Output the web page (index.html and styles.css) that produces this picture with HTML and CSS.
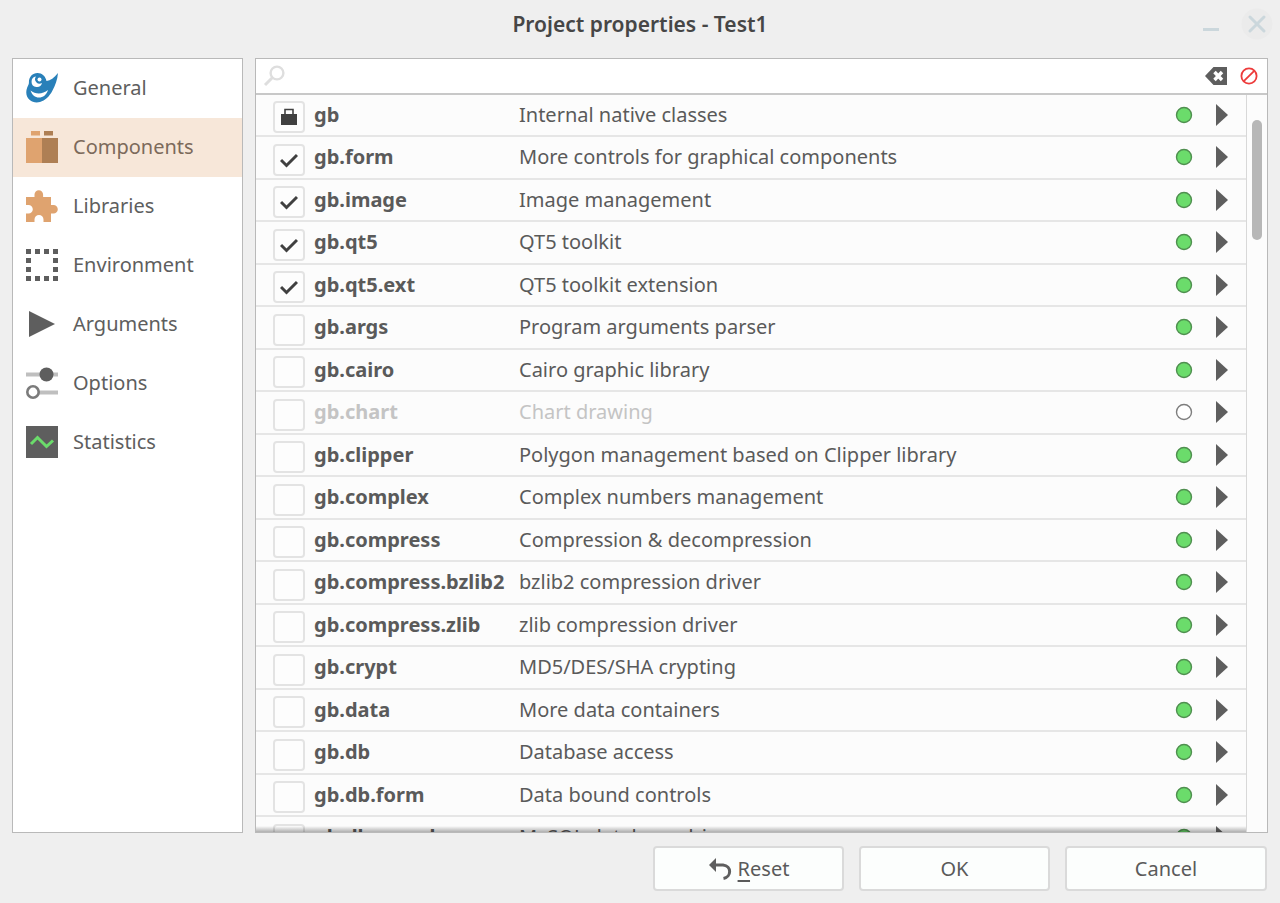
FILE: index.html
```html
<!DOCTYPE html>
<html lang="en">

<head>
    <meta charset="utf-8">
    <title>Project properties - Test1</title>
    <link rel="stylesheet" href="styles.css">
</head>

<body>
    <header class="titlebar">
        <h1>Project properties - Test1</h1>
        <div class="window-buttons">
            <button type="button" aria-label="Minimize">
                <svg width="32" height="32" viewBox="0 0 32 32"><path d="M8 21.5h16" stroke="#cbd7dc" stroke-width="3"/></svg>
            </button>
            <button type="button" aria-label="Close">
                <svg width="32" height="32" viewBox="0 0 32 32"><circle cx="16" cy="16" r="15.5" fill="#ebebeb"/><path d="M9 9l14 14M23 9L9 23" stroke="#cbd7dc" stroke-width="3" stroke-linecap="round"/></svg>
            </button>
        </div>
    </header>

    <main class="content">
        <nav class="sidebar">
            <a href="#general">
                <svg width="32" height="32" viewBox="0 0 32 32">
                    <path fill="#2980b9" d="M32 1C28 6 24.500 8.500 20.500 9C19.500 4 16 1 11.500 1C6.500 1 2.800 5 2.900 10.500C3 12.500 2 13.500 1.200 15.500C-.6 20 .2 25 3.500 27.800C6.500 30.500 10.500 31 14 30C19 28.500 23.500 24.500 26.500 18.500C29 13.500 31.500 8 32 1z"/>
                    <path fill="#fff" d="M4.500 18.500C9.500 22.500 16.500 22.500 22 18C20.500 23 17 25.500 13 25.500C9 25.500 6 23 4.500 18.500z"/>
                    <path fill="#fff" d="M10 4.500a5.300 5.300 0 1 0 6 6.500a4.500 4.500 0 0 1-6-6.500z"/>
                    <circle cx="13.500" cy="7.500" r="2" fill="#fff"/>
                </svg>
                <span>General</span>
            </a>
            <a href="#components" class="selected">
                <svg width="32" height="32" viewBox="0 0 32 32">
                    <path fill="#dfa36f" d="M5 0h9v4.500H5zM0 7h16v25H0z"/>
                    <path fill="#ae7f54" d="M18 0h9v4.500h-9zM16 7h16v25H16z"/>
                </svg>
                <span>Components</span>
            </a>
            <a href="#libraries">
                <svg width="32" height="32" viewBox="0 0 32 32">
                    <path fill="#dfa36f" d="M0 7h8.500V4.500a4.300 4.300 0 0 1 8.600 0V7H25v8h2.500a4.300 4.300 0 0 1 0 8.600H25V32h-7.500v-2.500a4.500 4.500 0 0 0-9 0V32H0v-8.400h2.500a4.300 4.300 0 0 0 0-8.600H0z"/>
                </svg>
                <span>Libraries</span>
            </a>
            <a href="#environment">
                <svg width="32" height="32" viewBox="0 0 32 32">
                    <path fill="none" stroke="#5e5e5e" stroke-width="5" stroke-dasharray="5 4" d="M0 2.500h32M0 29.500h32"/>
                    <path fill="none" stroke="#5e5e5e" stroke-width="5" stroke-dasharray="5 4" d="M2.500 9v14M29.500 9v14"/>
                </svg>
                <span>Environment</span>
            </a>
            <a href="#arguments">
                <svg width="32" height="32" viewBox="0 0 32 32"><path fill="#5e5e5e" d="M3 3l26 13L3 29z"/></svg>
                <span>Arguments</span>
            </a>
            <a href="#options">
                <svg width="32" height="32" viewBox="0 0 32 32">
                    <path stroke="#bfbfbf" stroke-width="4" d="M0 7.500h32M12 25.500h20"/>
                    <circle cx="20.500" cy="7.500" r="7" fill="#5e5e5e"/>
                    <circle cx="7" cy="25" r="5.700" fill="#fff" stroke="#7b7b7b" stroke-width="2.600"/>
                </svg>
                <span>Options</span>
            </a>
            <a href="#statistics">
                <svg width="32" height="32" viewBox="0 0 32 32">
                    <path fill="#5e5e5e" d="M0 0h32v32H0z"/>
                    <path fill="none" stroke="#6bdc6b" stroke-width="3" d="M5 18l6.500-6.500L20.500 20.500l6.500-6"/>
                </svg>
                <span>Statistics</span>
            </a>
        </nav>

        <section class="components">
            <div class="search">
                <label for="search-field">
                    <svg width="22" height="22" viewBox="0 0 22 22"><circle cx="14" cy="8" r="6.400" fill="none" stroke="#dedede" stroke-width="2.400"/><path d="M9.500 12.500L2 20" stroke="#dedede" stroke-width="3"/></svg>
                </label>
                <input type="text" id="search-field" aria-label="Search components">
                <button type="button" aria-label="Clear">
                    <svg width="24" height="20" viewBox="0 0 24 20"><path fill="#5e5e5e" d="M1 10L9.500 1H23v18H9.500z"/><path d="M10.500 6l7.500 8M18 6l-7.500 8" stroke="#fff" stroke-width="3.400"/></svg>
                </button>
                <button type="button" aria-label="Uncheck all">
                    <svg width="18" height="18" viewBox="0 0 18 18"><circle cx="9" cy="9" r="7.600" fill="none" stroke="#ed3b3b" stroke-width="1.800"/><path d="M3.800 14.200L14.200 3.800" stroke="#ed3b3b" stroke-width="1.800"/></svg>
                </button>
            </div>
            <div class="list">
                <div class="rows">
                    <table>
                        <tbody id="component-rows"></tbody>
                    </table>
                </div>
                <div class="scrollbar">
                    <div class="thumb"></div>
                </div>
            </div>
        </section>
    </main>

    <footer class="buttons">
        <button type="button">
            <svg width="24" height="24" viewBox="0 0 24 24"><path fill="#5e5e5e" d="M1 8l7-7v14z"/><path fill="none" stroke="#5e5e5e" stroke-width="3" d="M6 8h9c9 1 8.500 12 .5 13.500"/></svg>
            <span><u>R</u>eset</span>
        </button>
        <button type="button">OK</button>
        <button type="button" class="cancel">Cancel</button>
    </footer>

    <script>
        const components = [
            { name: "gb", text: "Internal native classes", state: "locked" },
            { name: "gb.form", text: "More controls for graphical components", state: "checked" },
            { name: "gb.image", text: "Image management", state: "checked" },
            { name: "gb.qt5", text: "QT5 toolkit", state: "checked" },
            { name: "gb.qt5.ext", text: "QT5 toolkit extension", state: "checked" },
            { name: "gb.args", text: "Program arguments parser" },
            { name: "gb.cairo", text: "Cairo graphic library" },
            { name: "gb.chart", text: "Chart drawing", state: "missing" },
            { name: "gb.clipper", text: "Polygon management based on Clipper library" },
            { name: "gb.complex", text: "Complex numbers management" },
            { name: "gb.compress", text: "Compression & decompression" },
            { name: "gb.compress.bzlib2", text: "bzlib2 compression driver" },
            { name: "gb.compress.zlib", text: "zlib compression driver" },
            { name: "gb.crypt", text: "MD5/DES/SHA crypting" },
            { name: "gb.data", text: "More data containers" },
            { name: "gb.db", text: "Database access" },
            { name: "gb.db.form", text: "Data bound controls" },
            { name: "gb.db.mysql", text: "MySQL database driver" }
        ];

        const marks = {
            locked: '<svg width="18" height="18" viewBox="0 0 18 18"><path fill="#404040" d="M1 6h16v11H1z"/><path fill="none" stroke="#404040" stroke-width="1.600" d="M5 7V1.500h8V7"/></svg>',
            checked: '<svg width="18" height="18" viewBox="0 0 18 18"><path fill="none" stroke="#404040" stroke-width="3" d="M1 9l5.500 5.500L17 4"/></svg>'
        };

        function createRows() {
            let body = document.getElementById("component-rows");
            components.forEach(item => {
                let row = document.createElement("tr");
                let state = item.state || "";
                let on = state === "locked" || state === "checked";
                if (state === "missing") {
                    row.classList.add("missing");
                }
                row.innerHTML = `
                    <td class="check">
                        <span class="box">
                            <input type="checkbox" id="${item.name}" ${on ? "checked" : ""} ${state === "locked" || state === "missing" ? "disabled" : ""}>
                            ${marks[state] || ""}
                        </span>
                    </td>
                    <td class="name"><label for="${item.name}"></label></td>
                    <td class="text"></td>
                    <td class="status"><svg width="18" height="18" viewBox="0 0 18 18"><circle cx="9" cy="9" r="7.500"/></svg></td>
                    <td class="more"><button type="button" aria-label="Details of ${item.name}"><svg width="12" height="22" viewBox="0 0 12 22"><path fill="#5e5e5e" d="M0 0l12 11L0 22z"/></svg></button></td>`;
                row.querySelector("label").textContent = item.name;
                row.querySelector(".text").textContent = item.text;
                body.append(row);
            });
        }

        createRows();
    </script>
</body>

</html>
```
FILE: styles.css
```css
* {
    margin: 0;
    padding: 0;
    box-sizing: border-box;
}

body {
    height: 100vh;
    display: flex;
    flex-direction: column;
    padding: 0 12px 12px;
    background-color: #efefef;
    color: #5a5a5a;
    font: 20px "Noto Sans", sans-serif;
    overflow: hidden;
}

button {
    display: block;
    font: inherit;
    color: inherit;
    border: none;
    background: none;
}

svg {
    display: block;
    flex: none;
}

.titlebar {
    flex: none;
    height: 58px;
    padding-bottom: 11px;
    display: grid;
    grid-template-columns: 1fr auto 1fr;
    align-items: center;
}

.titlebar h1 {
    grid-column: 2;
    font: 600 21px "Noto Sans", sans-serif;
    color: #464646;
}

.window-buttons {
    display: flex;
    justify-content: flex-end;
    gap: 14px;
    margin-right: -5px;
}

.content {
    flex: 1;
    min-height: 0;
    display: flex;
    gap: 12px;
}

.sidebar {
    flex: none;
    width: 231px;
    background-color: #fff;
    border: 1px solid #b9b9b9;
}

.sidebar a {
    height: 59px;
    padding: 0 13px 1px;
    display: flex;
    align-items: center;
    gap: 15px;
    color: #5e5e5e;
    text-decoration: none;
}

.sidebar span {
    padding-bottom: 2px;
}

.sidebar a.selected {
    background-color: #f7e7d9;
    color: #7c6a5b;
}

.components {
    flex: 1;
    display: flex;
    flex-direction: column;
    background-color: #fcfcfc;
    border: 1px solid #b9b9b9;
}

.search {
    flex: none;
    height: 36px;
    padding: 0 9px 0 7px;
    display: flex;
    align-items: center;
    gap: 12px;
    background-color: #fff;
    border-bottom: 2px solid #c8c8c8;
}

.search input {
    flex: 1;
    border: none;
    outline: none;
    font: inherit;
    background: none;
}

.list {
    flex: 1;
    min-height: 0;
    display: flex;
}

.rows {
    flex: 1;
    position: relative;
    overflow: hidden;
}

.rows::after {
    content: "";
    position: absolute;
    left: 0;
    right: 0;
    bottom: 0;
    height: 6px;
    background: linear-gradient(rgba(0, 0, 0, 0), rgba(0, 0, 0, 0.3));
}

table {
    width: 100%;
    border-collapse: collapse;
    table-layout: fixed;
}

tr {
    height: 42px;
    border-bottom: 2px solid #e6e6e6;
}

tr:first-child {
    height: 41px;
}

tr:nth-child(even) {
    height: 43px;
}

td {
    line-height: 28px;
    padding-bottom: 1px;
    white-space: nowrap;
    vertical-align: middle;
}

.check {
    width: 58px;
    padding: 4px 0 0 17px;
}

.box {
    width: 32px;
    height: 32px;
    display: grid;
    place-items: center;
}

.box input {
    grid-area: 1 / 1;
    width: 32px;
    height: 32px;
    appearance: none;
    border: 2px solid #e3e3e3;
    border-radius: 4px;
    background-color: #fdfdfd;
}

.box svg {
    grid-area: 1 / 1;
    pointer-events: none;
}

.name {
    width: 205px;
    font-weight: bold;
}

.status {
    width: 41px;
}

.status circle {
    fill: #6bdc6b;
    stroke: #4f8f4f;
    stroke-width: 1.4;
}

.more {
    width: 30px;
}

.missing {
    color: #c4c4c4;
}

.missing circle {
    fill: #fff;
    stroke: #7d7d7d;
}

.scrollbar {
    flex: none;
    width: 21px;
    padding: 25px 5px;
    border-left: 1px solid #d8d8d8;
}

.thumb {
    height: 120px;
    border-radius: 5px;
    background-color: #b7b7b7;
}

.buttons {
    flex: none;
    display: flex;
    justify-content: flex-end;
    gap: 15px;
    padding: 13px 1px 0 0;
}

.buttons button {
    width: 191px;
    height: 45px;
    display: flex;
    align-items: center;
    justify-content: center;
    gap: 6px;
    background-color: #fcfefd;
    border: 2px solid #dadada;
    border-radius: 4px;
}

.buttons .cancel {
    width: 202px;
}

.buttons u {
    text-underline-offset: 4px;
}
```
